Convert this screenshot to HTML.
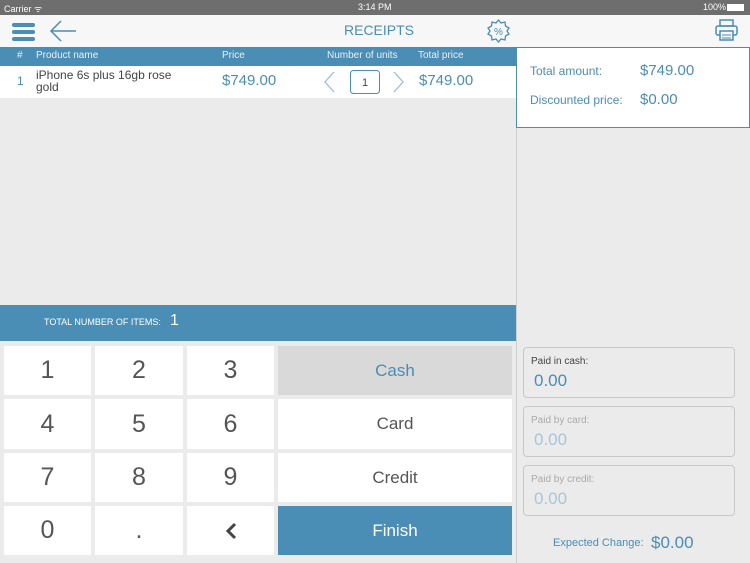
<!DOCTYPE html><html><head><style>
*{margin:0;padding:0;box-sizing:border-box}
body{width:750px;height:563px;position:relative;overflow:hidden;background:#ebebeb;font-family:"Liberation Sans",sans-serif;}
.a{position:absolute}
.k{position:absolute;background:#fff;display:flex;align-items:center;justify-content:center;font-size:25px;color:#555;}
.f{position:absolute;left:523px;width:212px;height:51px;border:1px solid #c8c8c8;border-radius:4px;background:#ebebeb}
.f .l{position:absolute;left:7px;top:8px;font-size:10px}
.f .v{position:absolute;left:10px;top:23px;font-size:17px}
</style></head><body>
<div class="a" style="left:0;top:0;width:750px;height:15px;background:#6e6e6e;color:#fff;font-size:9px">
<span class="a" style="left:4px;top:2px">Carrier ᯤ</span>
<span class="a" style="left:358px;top:2px">3:14 PM</span>
<span class="a" style="left:703px;top:2px">100%</span>
<span class="a" style="left:727px;top:4px;width:17px;height:7px;background:#fff"></span>
</div>
<div class="a" style="left:0;top:15px;width:750px;height:32px;background:#f7f7f7"></div>
<div class="a" style="left:12px;top:23px;width:23px;height:4px;background:#4a8db5;border-radius:2px"></div>
<div class="a" style="left:12px;top:30px;width:23px;height:4px;background:#4a8db5;border-radius:2px"></div>
<div class="a" style="left:12px;top:37px;width:23px;height:4px;background:#4a8db5;border-radius:2px"></div>
<svg class="a" style="left:49px;top:20px" width="28" height="22"><path d="M2 11H27M12 1L2 11L12 21" fill="none" stroke="#4a8db5" stroke-width="1.5"/></svg>
<div class="a" style="left:344px;top:22px;font-size:14px;color:#4a8db5">RECEIPTS</div>
<svg class="a" style="left:486px;top:19px" width="25" height="24"><path d="M12.5 1L15 4L19 3L19.5 7L23 9L21 12L23 15L19.5 17L19 21L15 20L12.5 23L10 20L6 21L5.5 17L2 15L4 12L2 9L5.5 7L6 3L10 4Z" fill="none" stroke="#4a8db5" stroke-width="1.3"/><text x="12.5" y="16" font-size="10" fill="#4a8db5" text-anchor="middle" font-family="Liberation Sans">%</text></svg>
<svg class="a" style="left:714px;top:18px" width="25" height="24"><rect x="6" y="2" width="13" height="6" fill="none" stroke="#4a8db5" stroke-width="1.5"/><rect x="2" y="8" width="21" height="9" rx="2" fill="none" stroke="#4a8db5" stroke-width="1.5"/><rect x="6" y="13" width="13" height="9" fill="#f7f7f7" stroke="#4a8db5" stroke-width="1.5"/><path d="M8 17H17M8 20H17" stroke="#4a8db5"/></svg>
<div class="a" style="left:0;top:47px;width:516px;height:19px;background:#4a8db5;color:#e8f1f7;font-size:10px">
<span class="a" style="left:17px;top:3px">#</span><span class="a" style="left:36px;top:3px">Product name</span><span class="a" style="left:222px;top:3px">Price</span><span class="a" style="left:327px;top:3px">Number of units</span><span class="a" style="left:418px;top:3px">Total price</span></div>
<div class="a" style="left:0;top:66px;width:516px;height:32px;background:#fff"></div>
<div class="a" style="left:17px;top:74px;font-size:12px;color:#4a8db5">1</div>
<div class="a" style="left:36px;top:69px;font-size:12px;color:#444;line-height:12px">iPhone 6s plus 16gb rose<br>gold</div>
<div class="a" style="left:222px;top:72px;font-size:15px;color:#4a8db5">$749.00</div>
<svg class="a" style="left:322px;top:70px" width="90" height="24"><path d="M12 2L3 12L12 22" fill="none" stroke="#9bbdd4" stroke-width="1.3"/><path d="M72 2L81 12L72 22" fill="none" stroke="#9bbdd4" stroke-width="1.3"/><rect x="28.5" y="0.5" width="29" height="23" rx="3" fill="#fff" stroke="#4a8db5"/><text x="43" y="16" font-size="11" fill="#444" text-anchor="middle" font-family="Liberation Sans">1</text></svg>
<div class="a" style="left:419px;top:72px;font-size:15px;color:#4a8db5">$749.00</div>
<div class="a" style="left:516px;top:47px;width:1px;height:516px;background:#d0d0d0"></div>
<div class="a" style="left:516px;top:47px;width:234px;height:81px;background:#fff;border:1px solid #4a8db5"></div>
<div class="a" style="left:530px;top:64px;font-size:12px;color:#4a8db5">Total amount:</div>
<div class="a" style="left:640px;top:62px;font-size:15px;color:#4a8db5">$749.00</div>
<div class="a" style="left:530px;top:93px;font-size:12px;color:#4a8db5">Discounted price:</div>
<div class="a" style="left:640px;top:91px;font-size:15px;color:#4a8db5">$0.00</div>
<div class="a" style="left:0;top:305px;width:516px;height:36px;background:#4a8db5;color:#fff"><span class="a" style="left:44px;top:12px;font-size:9px">TOTAL NUMBER OF ITEMS:</span><span class="a" style="left:170px;top:7px;font-size:16px">1</span></div>
<div class="k" style="left:4px;top:346px;width:87px;height:49px">1</div>
<div class="k" style="left:95px;top:346px;width:88px;height:49px">2</div>
<div class="k" style="left:187px;top:346px;width:87px;height:49px">3</div>
<div class="k" style="left:278px;top:346px;width:234px;height:49px;background:#d9d9d9;color:#4a8db5;font-size:17px">Cash</div>
<div class="k" style="left:4px;top:399px;width:87px;height:50px">4</div>
<div class="k" style="left:95px;top:399px;width:88px;height:50px">5</div>
<div class="k" style="left:187px;top:399px;width:87px;height:50px">6</div>
<div class="k" style="left:278px;top:399px;width:234px;height:50px;font-size:17px">Card</div>
<div class="k" style="left:4px;top:453px;width:87px;height:49px">7</div>
<div class="k" style="left:95px;top:453px;width:88px;height:49px">8</div>
<div class="k" style="left:187px;top:453px;width:87px;height:49px">9</div>
<div class="k" style="left:278px;top:453px;width:234px;height:49px;font-size:17px">Credit</div>
<div class="k" style="left:4px;top:506px;width:87px;height:49px">0</div>
<div class="k" style="left:95px;top:506px;width:88px;height:49px">.</div>
<div class="k" style="left:187px;top:506px;width:87px;height:49px"><svg width="14" height="18"><path d="M11 2L4 9L11 16" fill="none" stroke="#444" stroke-width="3"/></svg></div>
<div class="k" style="left:278px;top:506px;width:234px;height:49px;background:#4a8db5;color:#fff;font-size:17px">Finish</div>
<div class="f" style="top:347px"><span class="l" style="color:#444">Paid in cash:</span><span class="v" style="color:#4a8db5">0.00</span></div>
<div class="f" style="top:406px"><span class="l" style="color:#aaa">Paid by card:</span><span class="v" style="color:#a9c5d8">0.00</span></div>
<div class="f" style="top:465px"><span class="l" style="color:#aaa">Paid by credit:</span><span class="v" style="color:#a9c5d8">0.00</span></div>
<div class="a" style="left:553px;top:537px;font-size:11px;color:#4a8db5">Expected Change:</div>
<div class="a" style="left:651px;top:533px;font-size:17px;color:#4a8db5">$0.00</div>
</body></html>
